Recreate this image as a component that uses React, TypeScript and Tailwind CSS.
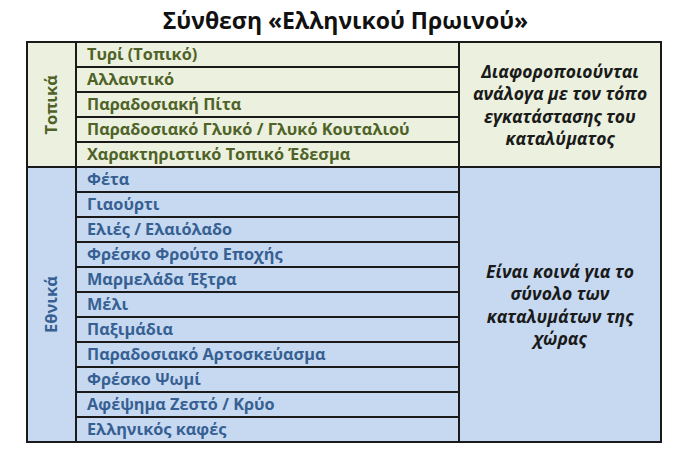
const local = [
  "Τυρί (Τοπικό)",
  "Αλλαντικό",
  "Παραδοσιακή Πίτα",
  "Παραδοσιακό Γλυκό / Γλυκό Κουταλιού",
  "Χαρακτηριστικό Τοπικό Έδεσμα",
];

const national = [
  "Φέτα",
  "Γιαούρτι",
  "Ελιές / Ελαιόλαδο",
  "Φρέσκο Φρούτο Εποχής",
  "Μαρμελάδα Έξτρα",
  "Μέλι",
  "Παξιμάδια",
  "Παραδοσιακό Αρτοσκεύασμα",
  "Φρέσκο Ψωμί",
  "Αφέψημα Ζεστό / Κρύο",
  "Ελληνικός καφές",
];

const cell = "border-2 border-[#1a1a1a] h-[25px] p-0 align-middle";

export default function App() {
  return (
    <div className="w-[691px] h-[468px] bg-white font-['Open_Sans','Noto_Sans',sans-serif]">
      {/* Title */}
      <div className="h-[41px] flex items-center justify-center pb-[1px]">
        <h1 className="text-[23px] font-bold text-[#111]">
          Σύνθεση «Ελληνικού Πρωινού»
        </h1>
      </div>

      {/* Table */}
      <table className="ml-[26px] w-[634px] border-collapse table-fixed">
        <colgroup>
          <col className="w-[49px]" />
          <col className="w-[383px]" />
          <col className="w-[202px]" />
        </colgroup>
        <tbody>
          {local.map((item, i) => (
            <tr key={item} className="bg-[#ebf1de]">
              {i === 0 && (
                <td rowSpan={local.length} className={cell}>
                  <div className="flex justify-center">
                    <span className="[writing-mode:vertical-rl] rotate-180 text-[16.5px] font-bold text-[#4f6228] leading-none">
                      Τοπικά
                    </span>
                  </div>
                </td>
              )}
              <td className={`${cell} pl-[10px] text-[16.3px] font-bold text-[#4f6228] leading-none whitespace-nowrap`}>
                {item}
              </td>
              {i === 0 && (
                <td
                  rowSpan={local.length}
                  className={`${cell} text-center italic font-bold text-[17.5px] leading-[22.5px] text-[#1a1a1a]`}
                >
                  Διαφοροποιούνται
                  <br />
                  ανάλογα με τον τόπο
                  <br />
                  εγκατάστασης του
                  <br />
                  καταλύματος
                </td>
              )}
            </tr>
          ))}
          {national.map((item, i) => (
            <tr key={item} className="bg-[#c6d9f1]">
              {i === 0 && (
                <td rowSpan={national.length} className={cell}>
                  <div className="flex justify-center">
                    <span className="[writing-mode:vertical-rl] rotate-180 text-[16.5px] font-bold text-[#376092] leading-none">
                      Εθνικά
                    </span>
                  </div>
                </td>
              )}
              <td className={`${cell} pl-[10px] text-[16.3px] font-bold text-[#376092] leading-none whitespace-nowrap`}>
                {item}
              </td>
              {i === 0 && (
                <td
                  rowSpan={national.length}
                  className={`${cell} text-center italic font-bold text-[17.5px] leading-[22.5px] text-[#1a1a1a]`}
                >
                  Είναι κοινά για το
                  <br />
                  σύνολο των
                  <br />
                  καταλυμάτων της
                  <br />
                  χώρας
                </td>
              )}
            </tr>
          ))}
        </tbody>
      </table>
    </div>
  );
}
